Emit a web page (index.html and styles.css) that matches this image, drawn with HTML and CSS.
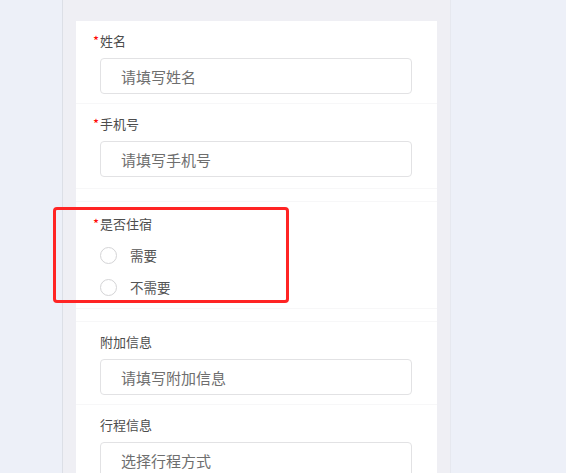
FILE: index.html
```html
<!DOCTYPE HTML>
<html>
    <head>
        <meta http-equiv="Content-Type" content="text/html;charset=UTF-8">
        <title>报名信息</title>
        <link rel="stylesheet" href="styles.css">
    </head>
<body>
<div class="phone">
    <div class="card">
        <div class="item">
            <div class="label"><span class="req">*</span>姓名</div>
            <input class="field" type="text" placeholder="请填写姓名">
        </div>
        <div class="item tall">
            <div class="label"><span class="req">*</span>手机号</div>
            <input class="field" type="text" placeholder="请填写手机号">
        </div>
        <div class="item group radios">
            <div class="label"><span class="req">*</span>是否住宿</div>
            <label class="radio"><span class="dot"></span>需要</label>
            <label class="radio"><span class="dot"></span>不需要</label>
        </div>
        <div class="item group">
            <div class="label">附加信息</div>
            <input class="field" type="text" placeholder="请填写附加信息">
        </div>
        <div class="item">
            <div class="label">行程信息</div>
            <input class="field" type="text" placeholder="选择行程方式" readonly>
        </div>
    </div>
</div>
<div class="highlight"></div>
</body>
</html>
```

FILE: styles.css
```css
html, body {
    margin: 0;
    height: 100%;
}
body {
    background: #edf0f8;
    font: 13px "Noto Sans CJK SC", "Liberation Sans", sans-serif;
    color: #4d4d4d;
    overflow: hidden;
}
.phone {
    margin-left: 62px;
    width: 387px;
    height: 100%;
    background: #efeff4;
    border-left: 1px solid #dcdfe6;
    border-right: 1px solid #e6e8ef;
    padding-top: 21px;
}
.card {
    margin: 0 13px;
    background: #fff;
    height: 100%;
}
.item {
    padding: 10px 25px 9px 24px;
    border-bottom: 1px solid #f7f7f8;
}
.tall {
    padding-bottom: 11px;
}
.group {
    margin-top: 12px;
    border-top: 1px solid #f7f7f8;
}
.label {
    line-height: 20px;
    height: 20px;
}
.req {
    color: #f00;
    margin-left: -7px;
    display: inline-block;
    width: 7px;
}
.field {
    display: block;
    box-sizing: border-box;
    width: 312px;
    height: 36px;
    margin: 7px 0 0 0;
    padding: 0 0 0 20px;
    border: 1px solid #e2e2e4;
    border-radius: 4px;
    font: 15px "Noto Sans CJK SC", "Liberation Sans", sans-serif;
    color: #333;
    outline: none;
}
.field::placeholder {
    color: #6e6e6e;
}
.radios {
    padding-top: 12px;
    padding-bottom: 5px;
}
.radios .label {
    margin-bottom: 5px;
}
.radio {
    display: flex;
    align-items: center;
    height: 32px;
    font-size: 13.5px;
    color: #555;
}
.dot {
    width: 15px;
    height: 15px;
    border: 1px solid #d4d4d6;
    border-radius: 50%;
    margin-right: 13px;
}
.highlight {
    position: absolute;
    left: 53px;
    top: 207px;
    width: 236px;
    height: 96px;
    box-sizing: border-box;
    border: 3px solid #ff2424;
    border-radius: 4px;
}
```
